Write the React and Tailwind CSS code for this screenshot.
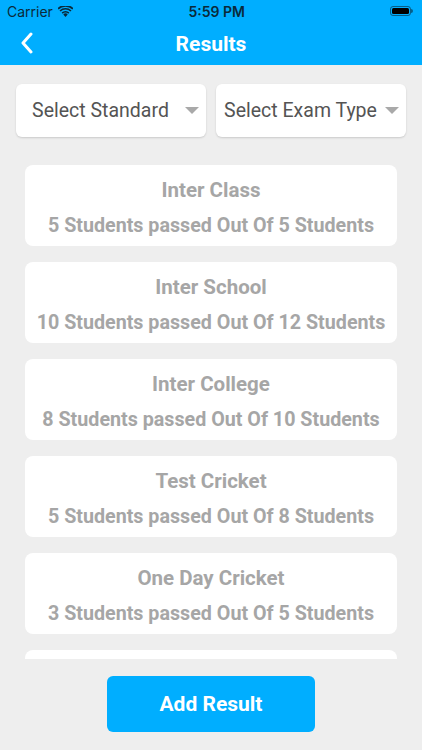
import React from 'react';

const results = [
  { title: 'Inter Class', passed: 5, total: 5 },
  { title: 'Inter School', passed: 10, total: 12 },
  { title: 'Inter College', passed: 8, total: 10 },
  { title: 'Test Cricket', passed: 5, total: 8 },
  { title: 'One Day Cricket', passed: 3, total: 5 },
];

const Caret = () => (
  <svg width="14" height="7" viewBox="0 0 14 7" className="shrink-0">
    <path d="M0 0 L14 0 L7 7 Z" fill="#a9a9a9" />
  </svg>
);

const Select = ({ label }) => (
  <div className="flex-1 h-[53px] bg-white rounded-md shadow-[0_1px_2px_rgba(0,0,0,0.15)] flex items-center pr-[7px]">
    <span className="flex-1 text-center text-[19.5px] leading-[26px] text-[#545454] whitespace-nowrap">{label}</span>
    <Caret />
  </div>
);

const App = () => {
  return (
    <div className="w-[422px] h-[750px] bg-[#eeeeee] flex flex-col overflow-hidden font-['Roboto',sans-serif]">
      {/* Header */}
      <div className="bg-[#00aeff] h-[65px] shrink-0 flex flex-col">
        <div className="h-[22px] flex items-center justify-between px-[7px] text-black">
          <div className="flex items-center gap-[5px] text-[14px] font-['Inter',sans-serif] text-[#0a2a3a]">
            <span>Carrier</span>
            <svg width="15" height="11" viewBox="0 0 15 11">
              <path d="M7.5 11 L5.3 8.4 A3.2 3.2 0 0 1 9.7 8.4 Z" fill="#0a2a3a" />
              <path d="M3.6 6.6 A5.6 5.6 0 0 1 11.4 6.6 L10.3 7.8 A4 4 0 0 0 4.7 7.8 Z" fill="#0a2a3a" />
              <path d="M1.5 4.4 A8.6 8.6 0 0 1 13.5 4.4 L12.4 5.6 A7 7 0 0 0 2.6 5.6 Z" fill="#0a2a3a" />
              <path d="M-0.5 2.2 A11.5 11.5 0 0 1 15.5 2.2 L14.4 3.4 A10 10 0 0 0 0.6 3.4 Z" fill="#0a2a3a" />
            </svg>
          </div>
          <span className="text-[14px] font-semibold font-['Inter',sans-serif] text-[#0a2a3a] -ml-[30px]">5:59 PM</span>
          <div className="flex items-center mr-[2px]">
            <div className="w-[21px] h-[10px] rounded-[3px] border border-[#0a2a3a]/60 p-[1px]">
              <div className="w-full h-full bg-black rounded-[1.5px]" />
            </div>
            <div className="w-[1.5px] h-[4px] bg-[#0a2a3a]/60 rounded-r-sm" />
          </div>
        </div>
        <div className="flex-1 flex items-center relative">
          <svg width="14" height="22" viewBox="0 0 14 22" className="absolute left-[20px] top-[10px]">
            <path d="M11 2 L3 11 L11 20" fill="none" stroke="white" strokeWidth="3" strokeLinecap="round" strokeLinejoin="round" />
          </svg>
          <div className="w-full text-center text-white font-bold text-[21px] leading-[28px]">Results</div>
        </div>
      </div>

      {/* Filters */}
      <div className="flex gap-[10px] px-[16px] pt-[19px] shrink-0">
        <Select label="Select Standard" />
        <Select label="Select Exam Type" />
      </div>

      {/* List */}
      <div className="flex-1 overflow-hidden mt-[28px] mb-[17px] px-[25px] flex flex-col gap-[16px]">
        {results.map((r, i) => (
          <div key={i} className="bg-white rounded-lg h-[81px] shrink-0 flex flex-col items-center pt-[12px]">
            <div className="text-[20.5px] font-bold text-[#a6a6a6] leading-[26px]">{r.title}</div>
            <div className="text-[19.7px] font-bold text-[#a6a6a6] leading-[26px] mt-[10px]">
              {r.passed} Students passed Out Of {r.total} Students
            </div>
          </div>
        ))}
        {/* next card peeking under the fold */}
        <div className="bg-white rounded-lg h-[81px] shrink-0" />
      </div>

      {/* Button */}
      <div className="flex justify-center pb-[18px] shrink-0">
        <button className="w-[208px] h-[56px] bg-[#00aeff] rounded-md text-white font-bold text-[21px] leading-[28px]">
          Add Result
        </button>
      </div>
    </div>
  );
};

export default App;
